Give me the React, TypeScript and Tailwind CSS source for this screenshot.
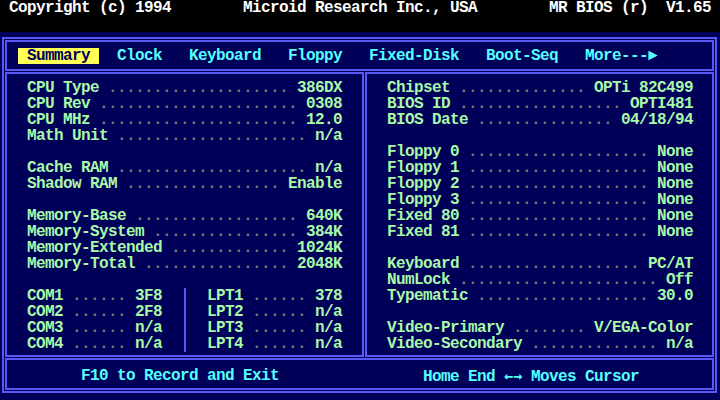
const menu = ["Summary", "Clock", "Keyboard", "Floppy", "Fixed-Disk", "Boot-Seq"];

type Row = [string, string] | null;

const leftRows: Row[] = [
  ["CPU Type", "386DX"],
  ["CPU Rev", "0308"],
  ["CPU MHz", "12.0"],
  ["Math Unit", "n/a"],
  null,
  ["Cache RAM", "n/a"],
  ["Shadow RAM", "Enable"],
  null,
  ["Memory-Base", "640K"],
  ["Memory-System", "384K"],
  ["Memory-Extended", "1024K"],
  ["Memory-Total", "2048K"],
  null,
];

const rightRows: Row[] = [
  ["Chipset", "OPTi 82C499"],
  ["BIOS ID", "OPTI481"],
  ["BIOS Date", "04/18/94"],
  null,
  ["Floppy 0", "None"],
  ["Floppy 1", "None"],
  ["Floppy 2", "None"],
  ["Floppy 3", "None"],
  ["Fixed 80", "None"],
  ["Fixed 81", "None"],
  null,
  ["Keyboard", "PC/AT"],
  ["NumLock", "Off"],
  ["Typematic", "30.0"],
  null,
  ["Video-Primary", "V/EGA-Color"],
  ["Video-Secondary", "n/a"],
];

const ports: [string, string, string, string][] = [
  ["COM1", "3F8", "LPT1", "378"],
  ["COM2", "2F8", "LPT2", "n/a"],
  ["COM3", "n/a", "LPT3", "n/a"],
  ["COM4", "n/a", "LPT4", "n/a"],
];

function DotRow({ row, width }: { row: Row; width: number }) {
  if (!row) return <div className="h-4" />;
  const [label, value] = row;
  const dots = ".".repeat(width - label.length - value.length - 2);
  return (
    <div className="flex h-4 whitespace-pre">
      <span className="text-[#a8f8a8]">{label} </span>
      <span className="text-[#787878]">{dots}</span>
      <span className="text-[#a8f8a8]"> {value}</span>
    </div>
  );
}

export default function App() {
  return (
    <div className="flex h-[400px] w-[720px] flex-col bg-[#000058] font-['Liberation_Mono','DejaVu_Sans_Mono',monospace] text-[16px] font-bold leading-4 tracking-[-0.6px]">
      {/* top line */}
      <div className="h-8 bg-black">
        <div className="flex h-4 gap-[72px] whitespace-pre pl-[9px] text-white">
          <span>Copyright (c) 1994</span>
          <span>Microid Research Inc., USA</span>
          <span>MR BIOS (r)  V1.65</span>
        </div>
      </div>

      <div className="flex-1 pb-[7px] pl-[2px] pr-[3px] pt-[5px]">
        <div className="flex h-full flex-col gap-px border-2 border-[#5858f4] p-px">
          {/* menu bar */}
          <div className="flex h-[31px] gap-[9px] border-2 border-[#5858f4] pl-[11px] pt-[6px] whitespace-pre">
            {menu.map((m, i) => (
              <span
                key={m}
                className={
                  i === 0
                    ? "h-4 bg-[#ffff55] px-[9px] text-[#000058]"
                    : "h-4 px-[9px] text-[#55ffff]"
                }
              >
                {m}
              </span>
            ))}
            <span className="h-4 px-[9px] text-[#55ffff]">More---►</span>
          </div>

          {/* panels */}
          <div className="flex h-[285px] gap-px">
            <div className="w-[359px] border-2 border-[#5858f4] pl-[20px] pt-[6px]">
              {leftRows.map((r, i) => (
                <DotRow key={i} row={r} width={35} />
              ))}
              <div className="flex">
                <div className="w-[135px]">
                  {ports.map((p) => (
                    <DotRow key={p[0]} row={[p[0], p[1]]} width={15} />
                  ))}
                </div>
                <div className="flex w-[45px] justify-center">
                  <div className="w-[2px] bg-[#5858f4]" />
                </div>
                <div className="w-[135px]">
                  {ports.map((p) => (
                    <DotRow key={p[2]} row={[p[2], p[3]]} width={15} />
                  ))}
                </div>
              </div>
            </div>
            <div className="flex-1 border-2 border-[#5858f4] pl-[20px] pt-[6px]">
              {rightRows.map((r, i) => (
                <DotRow key={i} row={r} width={34} />
              ))}
            </div>
          </div>

          {/* footer */}
          <div className="flex h-8 border-2 border-[#5858f4] pl-[74px] pt-[8px] whitespace-pre text-[#55ffff]">
            <span>F10 to Record and Exit</span>
            <span className="ml-[144px]">
              Home End <span className="font-['DejaVu_Sans_Mono'] text-[15px] tracking-[-0.03px]">←→</span> Moves Cursor
            </span>
          </div>
        </div>
      </div>
    </div>
  );
}
